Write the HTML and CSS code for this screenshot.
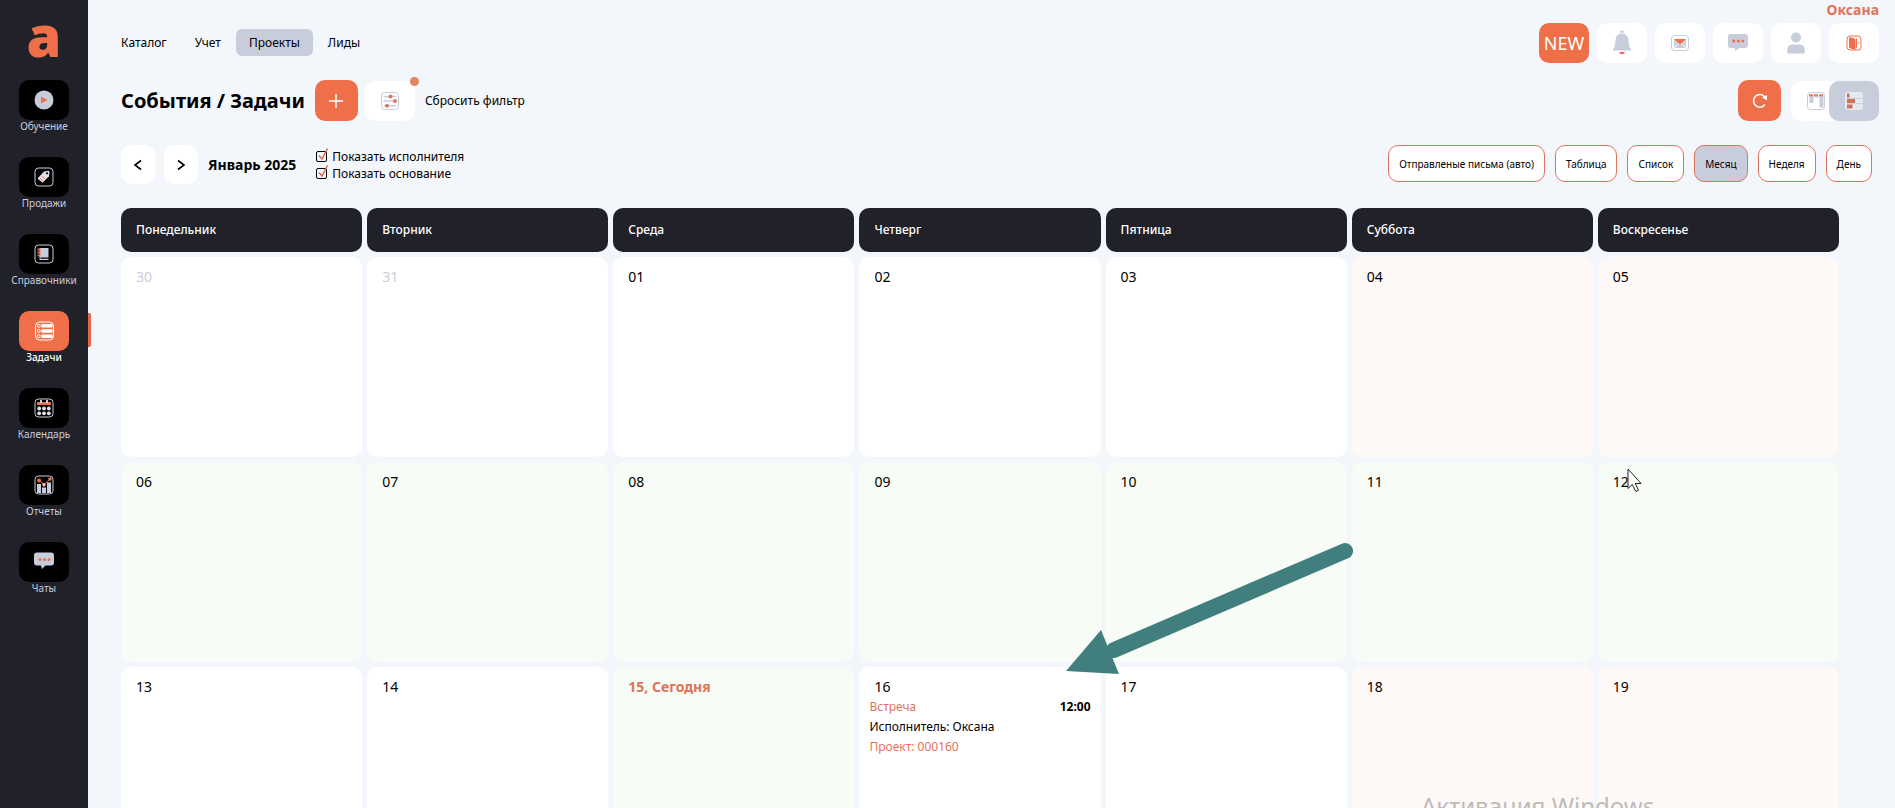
FILE: index.html
```html
<!DOCTYPE html>
<html lang="ru">
  <head>
    <meta charset="UTF-8" />
    <meta name="viewport" content="width=device-width, initial-scale=1.0" />

    <title>События / Задачи</title>

    <link rel="stylesheet" href="styles.css">
  </head>

  <body>
    <aside class="sidebar">
      <a class="logo" href="#">a</a>
      <nav class="menu">
        <a class="menu-item" href="#">
          <span class="menu-icon">
            <svg width="20" height="20" viewBox="0 0 20 20">
              <circle cx="10" cy="10" r="9.5" fill="#c8cddc" />
              <path d="M7 6.500v7l6.500-3.500z" fill="#ee6f48" />
            </svg>
          </span>
          Обучение
        </a>
        <a class="menu-item" href="#">
          <span class="menu-icon">
            <svg width="20" height="20" viewBox="0 0 20 20">
              <rect x="1" y="1" width="18" height="18" rx="3.500" fill="none" stroke="#c8cddc" />
              <path d="M3.500 11.500L10 4.500l4.500-.8 1 1.200-.5 4.300-6.500 6.600z" fill="#dfe2ea" />
              <circle cx="13" cy="6.300" r="1.100" fill="#000" />
              <path d="M6 11l3 3M8 9l3 3" stroke="#ee6f48" stroke-width=".8" />
            </svg>
          </span>
          Продажи
        </a>
        <a class="menu-item" href="#">
          <span class="menu-icon">
            <svg width="20" height="20" viewBox="0 0 20 20">
              <rect x="1" y="1" width="18" height="18" rx="3.500" fill="none" stroke="#c8cddc" />
              <path d="M5.500 4h9v9.500h-8v1.200h8v1.300h-9z" fill="#c8cddc" />
              <path d="M3.500 5.500h3M3.500 8.500h3M3.500 11.500h3" stroke="#ee6f48" stroke-width="1.800" />
            </svg>
          </span>
          Справочники
        </a>
        <a class="menu-item active" href="#">
          <span class="menu-icon">
            <svg width="20" height="20" viewBox="0 0 20 20">
              <rect x="1.500" y="1" width="18" height="18" rx="4" fill="none" stroke="#fff" />
              <path d="M7.500 4.800h11M7.500 10h11M7.500 15.200h11" stroke="#fff" stroke-width="3.600" />
              <g fill="none" stroke="#fff">
                <circle cx="4.800" cy="4.800" r="1.500" />
                <circle cx="4.800" cy="10" r="1.500" />
                <circle cx="4.800" cy="15.200" r="1.500" />
              </g>
            </svg>
          </span>
          Задачи
        </a>
        <a class="menu-item" href="#">
          <span class="menu-icon">
            <svg width="20" height="20" viewBox="0 0 20 20">
              <rect x="1" y="1" width="18" height="18" rx="3.500" fill="none" stroke="#c8cddc" />
              <path d="M3 4h14v3H3z" fill="#ee6f48" />
              <path d="M7 2v3M13 2v3" stroke="#dfe2ea" stroke-width="1.800" />
              <g fill="#dfe2ea">
                <circle cx="5.200" cy="10.500" r="1.900" />
                <circle cx="10" cy="10.500" r="1.900" />
                <circle cx="14.800" cy="10.500" r="1.900" />
                <circle cx="5.200" cy="15.300" r="1.900" />
                <circle cx="10" cy="15.300" r="1.900" />
                <circle cx="14.800" cy="15.300" r="1.900" />
              </g>
            </svg>
          </span>
          Календарь
        </a>
        <a class="menu-item" href="#">
          <span class="menu-icon">
            <svg width="20" height="20" viewBox="0 0 20 20">
              <rect x="1" y="1" width="18" height="18" rx="3.500" fill="none" stroke="#c8cddc" />
              <path d="M3 9h4v9H3zM8 12.500h4V18H8zM13 7.500h4V18h-4z" fill="#c8cddc" />
              <path d="M5 5.500l5 4 5.500-5" fill="none" stroke="#ee6f48" />
              <g fill="#ee6f48">
                <circle cx="5" cy="5.500" r="2" />
                <circle cx="16" cy="4" r="1.800" />
              </g>
              <circle cx="10" cy="9.800" r="1.700" fill="#f3c3b3" />
            </svg>
          </span>
          Отчеты
        </a>
        <a class="menu-item" href="#">
          <span class="menu-icon">
            <svg width="20" height="20" viewBox="0 0 20 20">
              <path d="M3 .5h14q3 0 3 3v7q0 3-3 3h-5.500L7.800 17l-.8-3.500H3q-3 0-3-3v-7q0-3 3-3z" fill="#c8cddc" />
              <g fill="#ee6f48">
                <circle cx="6" cy="7.500" r="1.500" />
                <circle cx="10.500" cy="7.500" r="1.500" />
                <circle cx="15" cy="7.500" r="1.500" />
              </g>
            </svg>
          </span>
          Чаты
        </a>
      </nav>
    </aside>

    <main class="page">
      <header class="topbar">
        <nav class="tabs">
          <a class="tab" href="#">Каталог</a>
          <a class="tab" href="#">Учет</a>
          <a class="tab current" href="#">Проекты</a>
          <a class="tab" href="#">Лиды</a>
        </nav>
        <div class="user">
          <a class="user-name" href="#">Оксана</a>
          <div class="user-buttons">
            <button class="btn btn-new">NEW</button>
            <button class="btn" aria-label="Уведомления">
              <svg width="20" height="26" viewBox="0 0 20 26">
                <path d="M7.500 2.800Q7.500.5 10 .5t2.500 2.300z" fill="#c8cddc" />
                <path d="M10 3.500q6 0 6.500 6.500.2 7 2.500 9v1.500H1V19q2.300-2 2.500-9 .5-6.500 6.500-6.500z" fill="#c8cddc" />
                <path d="M7 22h6q-.8 2.300-3 2.300T7 22z" fill="#ee6f48" />
              </svg>
            </button>
            <button class="btn" aria-label="Почта">
              <svg width="20" height="20" viewBox="0 0 20 20">
                <rect x="1.500" y="2.500" width="17" height="15" rx="3" fill="none" stroke="#c8cddc" />
                <path d="M4 6v9h12V6l-6 5z" fill="#c8cddc" />
                <path d="M4 6h12l-6 5.500z" fill="#ee6f48" />
                <path d="M4 15l4.500-5M16 15l-4.500-5" stroke="#fff" />
              </svg>
            </button>
            <button class="btn" aria-label="Чат">
              <svg width="20" height="20" viewBox="0 0 20 20">
                <path d="M3 1h14q3 0 3 3v8q0 3-3 3h-5.500L7 18v-3H3q-3 0-3-3V4q0-3 3-3z" fill="#c8cddc" />
                <g fill="#ee6f48">
                  <circle cx="5.800" cy="8" r="1.500" />
                  <circle cx="10.300" cy="8" r="1.500" />
                  <circle cx="14.800" cy="8" r="1.500" />
                </g>
              </svg>
            </button>
            <button class="btn" aria-label="Профиль">
              <svg width="18" height="22" viewBox="0 0 18 22">
                <circle cx="9" cy="5.500" r="5" fill="#c8cddc" />
                <path d="M5.500 12.500h7q5.500 0 5.500 7 0 2-2 2H2q-2 0-2-2 0-7 5.500-7z" fill="#c8cddc" />
              </svg>
            </button>
            <button class="btn" aria-label="Выход">
              <svg width="20" height="20" viewBox="0 0 20 20">
                <rect x="3" y="3" width="14" height="14" rx="3" fill="none" stroke="#ee6f48" />
                <path d="M5 4.500h3l3.500 1.800V17L5 15z" fill="#ee6f48" />
                <path d="M12.500 5.500v9h-1" fill="none" stroke="#ee6f48" />
                <path d="M13.500 8l3 2-3 2z" fill="#c8cddc" />
              </svg>
            </button>
          </div>
        </div>
      </header>

      <section class="heading">
        <h1>События / Задачи</h1>
        <button class="btn btn-square" aria-label="Добавить">
          <svg width="16" height="16" viewBox="0 0 16 16">
            <path d="M8 1v14M1 8h14" stroke="#fff" stroke-width="1.500" />
          </svg>
        </button>
        <button class="btn btn-filter" aria-label="Фильтр">
          <svg width="20" height="20" viewBox="0 0 20 20">
            <rect x="1.500" y="1.500" width="17" height="17" rx="3" fill="none" stroke="#c8cddc" />
            <path d="M3.500 5.500h13M3.500 10h13M3.500 14.800h13" stroke="#c8cddc" stroke-width="1.400" />
            <g fill="#e0785c">
              <circle cx="10.500" cy="5.500" r="2" />
              <circle cx="15" cy="10" r="2" />
              <circle cx="7" cy="14.800" r="2" />
            </g>
          </svg>
          <span class="dot"></span>
        </button>
        <a class="reset" href="#">Сбросить фильтр</a>
        <div class="heading-right">
          <button class="btn btn-square" aria-label="Обновить">
            <svg width="16" height="16" viewBox="0 0 16 16">
              <path d="M13 11.500A6.300 6.300 0 1 1 12.800 4" fill="none" stroke="#fff" stroke-width="1.500" />
              <path d="M10 4.500l5-2.500v5.500z" fill="#fff" />
            </svg>
          </button>
          <div class="switch">
            <button class="btn" aria-label="Доска">
              <svg width="20" height="20" viewBox="0 0 20 20">
                <rect x="1.500" y="1.500" width="17" height="17" rx="3" fill="none" stroke="#c8cddc" />
                <path d="M3.500 5h4v7h-4zM8.500 5h4v1.500h-4zM13.500 5h4v11.500h-4z" fill="#c8cddc" />
                <path d="M3 4.300h4M8 4.300h4M13 4.300h4" stroke="#e0785c" stroke-width="2" />
              </svg>
            </button>
            <button class="btn selected" aria-label="Список задач">
              <svg width="20" height="20" viewBox="0 0 20 20">
                <rect x="1" y="1" width="18" height="18" rx="3" fill="#e7e9f1" />
                <path d="M3 7.300h16M3 12.700h16" stroke="#c8cddc" />
                <path d="M3 2.500h2.500v4H3zM3 8h8v4H3zM3 13.500h5.500v4H3z" fill="#cf7358" />
              </svg>
            </button>
          </div>
        </div>
      </section>

      <section class="toolbar">
        <button class="btn btn-arrow" aria-label="Предыдущий месяц">
          <svg width="10" height="12" viewBox="0 0 10 12">
            <path d="M8 1.500L2 6l6 4.500" fill="none" stroke="#000" stroke-width="1.600" />
          </svg>
        </button>
        <button class="btn btn-arrow" aria-label="Следующий месяц">
          <svg width="10" height="12" viewBox="0 0 10 12">
            <path d="M2 1.500L8 6l-6 4.500" fill="none" stroke="#000" stroke-width="1.600" />
          </svg>
        </button>
        <h2>Январь 2025</h2>
        <div class="checks">
          <label class="check"><input type="checkbox" checked /><svg class="tick" width="14" height="14" viewBox="0 0 14 14"><path d="M4 7.500l3 3.500L12.500.5" fill="none" stroke="#e0604a" stroke-width="1.400" /></svg>Показать исполнителя</label>
          <label class="check"><input type="checkbox" checked /><svg class="tick" width="14" height="14" viewBox="0 0 14 14"><path d="M4 7.500l3 3.500L12.500.5" fill="none" stroke="#e0604a" stroke-width="1.400" /></svg>Показать основание</label>
        </div>
        <div class="views">
          <button class="view">Отправленые письма (авто)</button>
          <button class="view">Таблица</button>
          <button class="view">Список</button>
          <button class="view selected">Месяц</button>
          <button class="view">Неделя</button>
          <button class="view">День</button>
        </div>
      </section>

      <div class="calendar-wrap">
        <table class="calendar">
          <thead>
            <tr>
              <th>Понедельник</th>
              <th>Вторник</th>
              <th>Среда</th>
              <th>Четверг</th>
              <th>Пятница</th>
              <th>Суббота</th>
              <th>Воскресенье</th>
            </tr>
          </thead>
          <tbody>
            <tr>
              <td class="other">30</td>
              <td class="other">31</td>
              <td>01</td>
              <td>02</td>
              <td>03</td>
              <td class="weekend">04</td>
              <td class="weekend">05</td>
            </tr>
            <tr>
              <td class="green">06</td>
              <td class="green">07</td>
              <td class="green">08</td>
              <td class="green">09</td>
              <td class="green">10</td>
              <td class="green">11</td>
              <td class="green">12</td>
            </tr>
            <tr>
              <td>13</td>
              <td>14</td>
              <td class="green today">15, Сегодня</td>
              <td>
                16
                <div class="event">
                  <div class="event-head">
                    <a href="#">Встреча</a>
                    <b>12:00</b>
                  </div>
                  <div>Исполнитель: Оксана</div>
                  <a href="#">Проект: 000160</a>
                </div>
              </td>
              <td>17</td>
              <td class="weekend">18</td>
              <td class="weekend">19</td>
            </tr>
          </tbody>
        </table>
      </div>
    </main>

    <!-- Things lying over the calendar -->
    <svg class="pointer-arrow" width="296" height="136" viewBox="0 0 296 136">
      <path d="M52 110L283 11" stroke="#417f7e" stroke-width="16" stroke-linecap="round" />
      <path d="M4 131L39 90l18 44z" fill="#417f7e" />
    </svg>
    <svg class="cursor" width="16" height="25" viewBox="0 0 16 25">
      <path d="M1 1v19.500l4.300-4 3.500 7 2.700-1.300-3.300-6.700H14z" fill="#fff" stroke="#222" />
    </svg>
    <div class="watermark">Активация Windows</div>
  </body>
</html>
```
FILE: styles.css
```css
html,
body {
  height: 100%;
  margin: 0;
}

body {
  display: flex;
  position: relative;
  overflow: hidden;
  background: #f3f6fb;
  color: #000;
  font-family: "Noto Sans", sans-serif;
  font-size: 12px;
}

a {
  color: inherit;
  text-decoration: none;
}

button {
  padding: 0;
  border: 0;
  font-family: inherit;
  cursor: pointer;
}

svg {
  display: block;
}

/* Sidebar */
.sidebar {
  flex: none;
  width: 88px;
  background: #21212a;
}

.logo {
  display: block;
  height: 80px;
  line-height: 70px;
  text-align: center;
  font-family: "Open Sans", sans-serif;
  font-weight: 800;
  font-size: 56px;
  color: #ee6f48;
}

.menu {
  display: flex;
  flex-direction: column;
  gap: 21px;
}

.menu-item {
  position: relative;
  display: flex;
  flex-direction: column;
  align-items: center;
  font-size: 10px;
  line-height: 12px;
  height: 56px;
  color: #c8cddc;
}

.menu-icon {
  display: flex;
  align-items: center;
  justify-content: center;
  flex: none;
  width: 50px;
  height: 40px;
  border-radius: 10px;
  background: #000;
}

.menu-item.active {
  color: #fff;
  font-weight: 500;
}

.menu-item.active .menu-icon {
  background: #ee6f48;
}

.menu-item.active::after {
  content: "";
  position: absolute;
  left: 100%;
  top: 2px;
  width: 3px;
  height: 34px;
  border-radius: 0 2px 2px 0;
  background: #e2674a;
}

/* Top bar */
.page {
  flex: 1;
  min-width: 0;
  padding-left: 33px;
}

.topbar {
  display: flex;
  justify-content: space-between;
  padding-right: 16px;
}

.tabs {
  display: flex;
  align-items: flex-start;
  gap: 2px;
  padding-top: 29px;
  margin-left: -13px;
}

.tab {
  padding: 0 13px;
  line-height: 27px;
  border-radius: 6px;
}

.tab.current {
  background: #c8cddc;
}

.user {
  display: flex;
  flex-direction: column;
  align-items: flex-end;
}

.user-name {
  font-size: 14px;
  line-height: 20px;
  margin-bottom: 3px;
  font-weight: bold;
  color: #e2735a;
}

.user-buttons {
  display: flex;
  gap: 8px;
}

.btn {
  position: relative;
  display: flex;
  align-items: center;
  justify-content: center;
  flex: none;
  width: 50px;
  height: 40px;
  border-radius: 10px;
  background: #fff;
}

.btn-new {
  background: #ee6f48;
  color: #fff;
  font-size: 18px;
}

.btn-square {
  width: 43px;
  height: 41px;
  background: #ee6f48;
}

.btn-arrow {
  width: 34px;
  height: 39px;
}

/* Heading */
.heading {
  display: flex;
  align-items: center;
  padding: 17px 16px 0 0;
}

h1 {
  margin: 0 10px 0 0;
  font-size: 20px;
  line-height: 28px;
}

.btn-filter {
  margin: 0 10px 0 7px;
}

.dot {
  position: absolute;
  top: -4px;
  right: -4px;
  width: 9px;
  height: 9px;
  border-radius: 50%;
  background: #e08566;
}

.heading-right {
  display: flex;
  align-items: center;
  gap: 10px;
  margin-left: auto;
}

.switch {
  display: flex;
}

.switch .selected {
  margin-left: -12px;
  background: #c8cddc;
}

/* Toolbar */
.toolbar {
  display: flex;
  align-items: center;
  padding: 24px 23px 24px 0;
}

.btn-arrow + .btn-arrow {
  margin-left: 9px;
}

h2 {
  margin: 0 20px 0 10px;
  font-size: 14px;
  line-height: 20px;
}

.check {
  display: flex;
  align-items: center;
  position: relative;
  line-height: 17px;
}

.check input {
  appearance: none;
  box-sizing: border-box;
  width: 11px;
  height: 11px;
  margin: 0 5px 0 0;
  border: 1px solid #000;
  border-radius: 2px;
}

.tick {
  position: absolute;
  left: -1px;
  top: 0;
}

.views {
  display: flex;
  align-self: flex-start;
  gap: 10px;
  margin-left: auto;
}

.view {
  height: 37px;
  padding: 0 10px;
  border: 1px solid #dc7560;
  border-radius: 10px;
  background: #fff;
  color: #000;
  font-size: 10px;
}

.view.selected {
  background: #c8cddc;
}

/* Calendar */
.calendar-wrap {
  padding-right: 51px;
  margin: -5px 0 0 -5px;
}

.calendar {
  width: 100%;
  table-layout: fixed;
  border-spacing: 5px;
}

.calendar th {
  box-sizing: border-box;
  height: 44px;
  padding: 0 15px 2px;
  border-radius: 10px;
  background: #21212a;
  color: #fff;
  font-size: 12px;
  font-weight: 500;
  text-align: left;
}

.calendar td {
  box-sizing: border-box;
  height: 200px;
  padding: 10px 15px;
  border-radius: 10px;
  background: #fff;
  font-size: 14px;
  line-height: 20px;
  vertical-align: top;
}

.calendar .other {
  color: #c8cddc;
}

.calendar .weekend {
  background: #fef9f7;
}

.calendar .green {
  background: #f7fcf6;
}

.calendar .today {
  color: #e2735a;
  font-weight: bold;
}

.event {
  margin: 0 -5px;
  font-size: 12px;
}

.event a {
  color: #e2735a;
}

.event-head {
  display: flex;
  justify-content: space-between;
}

/* Overlays */
.pointer-arrow {
  position: absolute;
  left: 1062px;
  top: 540px;
}

.cursor {
  position: absolute;
  left: 1627px;
  top: 468px;
}

.watermark {
  position: absolute;
  left: 1421px;
  top: 790px;
  font-size: 24px;
  line-height: 32px;
  color: #bdbbbb;
}
```
